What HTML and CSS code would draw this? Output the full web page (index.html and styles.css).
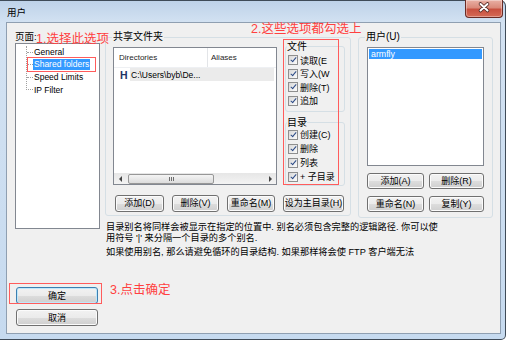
FILE: index.html
```html
<!DOCTYPE html>
<html lang="zh-CN">
<head>
    <meta charset="UTF-8">
    <title>用户</title>
    <link rel="stylesheet" href="styles.css">
</head>
<body>

<div class="window">
    <div class="titlebar">
        <span class="title">用户</span>
        <span class="close">
            <svg width="38" height="17" viewBox="0 0 38 17">
                <path d="M15.5 5 L22.5 11.5 M22.5 5 L15.5 11.5" stroke="#4e2520" stroke-width="3.6" stroke-linecap="round"/>
                <path d="M15.5 5 L22.5 11.5 M22.5 5 L15.5 11.5" stroke="#fff" stroke-width="2" stroke-linecap="round"/>
            </svg>
        </span>
    </div>

    <div class="client">
        <!-- left: page tree + ok/cancel -->
        <div class="side">
            <div class="pages-label">页面:</div>
            <div class="tree">
                <ul>
                    <li>General</li>
                    <li><span class="selected">Shared folders</span></li>
                    <li>Speed Limits</li>
                    <li>IP Filter</li>
                </ul>
            </div>
            <div class="side-buttons">
                <button class="btn default">确定</button>
                <button class="btn">取消</button>
            </div>
        </div>

        <div class="main">
            <div class="groups">
                <fieldset class="group shared">
                    <legend>共享文件夹</legend>
                    <div class="shared-body">
                        <div class="dirlist">
                            <div class="list-header">
                                <span class="col-dir">Directories</span>
                                <span class="col-alias">Aliases</span>
                            </div>
                            <div class="dir-row">
                                <b class="home">H</b>
                                <span class="dir-path">C:\Users\byb\De...</span>
                            </div>
                            <div class="hscroll">
                                <span class="arrow"><span class="tri left"></span></span>
                                <span class="thumb"><span class="grip"></span></span>
                                <span class="arrow"><span class="tri right"></span></span>
                            </div>
                        </div>

                        <div class="perms">
                            <fieldset class="sub files">
                                <legend>文件</legend>
                                <label class="check"><span class="box"></span><span class="text">读取(E</span></label>
                                <label class="check"><span class="box"></span><span class="text">写入(W</span></label>
                                <label class="check"><span class="box"></span><span class="text">删除(T)</span></label>
                                <label class="check"><span class="box"></span><span class="text">追加</span></label>
                            </fieldset>
                            <fieldset class="sub dirs">
                                <legend>目录</legend>
                                <label class="check"><span class="box"></span><span class="text">创建(C)</span></label>
                                <label class="check"><span class="box"></span><span class="text">删除</span></label>
                                <label class="check"><span class="box"></span><span class="text">列表</span></label>
                                <label class="check"><span class="box"></span><span class="text">+ 子目录</span></label>
                            </fieldset>
                        </div>
                    </div>
                    <div class="btn-row">
                        <button class="btn w-add">添加(D)</button>
                        <button class="btn w-del">删除(V)</button>
                        <button class="btn w-ren">重命名(M)</button>
                        <button class="btn w-home">设为主目录(H)</button>
                    </div>
                </fieldset>

                <fieldset class="group users">
                    <legend>用户(U)</legend>
                    <div class="userlist">
                        <div class="user-item">armfly</div>
                    </div>
                    <div class="user-buttons">
                        <button class="btn">添加(A)</button>
                        <button class="btn">删除(R)</button>
                        <button class="btn">重命名(N)</button>
                        <button class="btn">复制(Y)</button>
                    </div>
                </fieldset>
            </div>

            <div class="note">
                <p>目录别名将同样会被显示在指定的位置中. 别名必须包含完整的逻辑路径. 你可以使<br>用符号 '|' 来分隔一个目录的多个别名.</p>
                <p>如果使用别名, 那么请避免循环的目录结构. 如果那样将会使 FTP 客户端无法</p>
            </div>
        </div>
    </div>
</div>

<!-- red annotations drawn over the dialog -->
<div class="mark-text step1">1.选择此选项</div>
<div class="mark-box box1"></div>
<div class="mark-text step2">2.这些选项都勾选上</div>
<div class="mark-box box2"></div>
<div class="mark-text step3">3.点击确定</div>
<div class="mark-box box3"></div>

</body>
</html>
```

FILE: styles.css
```css
body {
    margin: 0;
    width: 506px;
    height: 340px;
    position: relative;
    overflow: hidden;
    background: #fff;
    font-family: "Liberation Sans", "Noto Sans CJK SC", sans-serif;
    font-size: 9.5px;
    color: #000;
}

/* Window frame */
.window {
    box-sizing: border-box;
    width: 506px;
    height: 340px;
    border: 1px solid #3f4b58;
    border-left: none;
    border-radius: 0 6px 5px 0;
    padding: 0 4px 5px 6px;
    background: linear-gradient(to bottom, #bed2e9 0, #d3e2f2 22px, #c6daef 100%);
    display: flex;
    flex-direction: column;
}

.titlebar {
    height: 21px;
    flex: none;
    display: flex;
    justify-content: space-between;
    align-items: flex-start;
}

.title {
    margin: 6px 0 0 1px;
    line-height: 12px;
    font-size: 9.5px;
}

.close {
    box-sizing: border-box;
    width: 38px;
    height: 18px;
    margin: -1px -2px 0 0;
    border: 1px solid #6a2b24;
    border-top: none;
    border-radius: 0 0 4px 4px;
    background: linear-gradient(to bottom, #e9b0a4 0%, #da8a7a 45%, #c8503f 55%, #d56a55 100%);
    box-shadow: inset 0 0 0 1px rgba(255, 255, 255, 0.35);
}

.close svg {
    display: block;
    margin: -1px 0 0 -1px;
}

.client {
    flex: 1;
    border: 1px solid #8f9fb1;
    background: #f0f0f0;
    display: grid;
    grid-template-columns: 85px 1fr;
    column-gap: 5px;
    padding: 8px 7px 7px 8px;
}

/* Left side */
.side {
    display: flex;
    flex-direction: column;
}

.pages-label {
    height: 12px;
    line-height: 12px;
}

.tree {
    box-sizing: border-box;
    height: 186px;
    border: 1px solid #828790;
    background: #fff;
}

.tree ul {
    list-style: none;
    margin: 2px 0 0 10px;
    padding: 0;
    border-left: 1px dotted #a0a0a0;
}

.tree li {
    height: 12.5px;
    display: flex;
    align-items: center;
    font-size: 8.5px;
    white-space: nowrap;
}

.tree li::before {
    content: "";
    width: 6px;
    border-top: 1px dotted #a0a0a0;
    margin-right: 1px;
}

/* hide the lower half of the vertical line on the last item */
.tree li:last-child {
    margin-left: -1px;
    background: linear-gradient(to bottom, transparent 50%, #fff 50%) no-repeat left top / 1px 100%;
}

.tree li:last-child::before {
    width: 7px;
}

.tree .selected {
    background: #3399ff;
    color: #fff;
    line-height: 11px;
    padding: 0 1px;
    margin-left: -1px;
}

.side-buttons {
    margin-top: auto;
    display: flex;
    flex-direction: column;
    gap: 5px;
    padding-left: 1px;
}

.side-buttons .btn {
    width: 82px;
}

/* Buttons */
.btn {
    box-sizing: border-box;
    height: 17px;
    padding: 0;
    border: 1px solid #707070;
    border-radius: 3px;
    background: linear-gradient(to bottom, #f2f2f2 0%, #ebebeb 50%, #dddddd 51%, #cfcfcf 100%);
    box-shadow: inset 0 0 0 1px #fbfbfb;
    font-family: "Liberation Sans", "Noto Sans CJK SC", sans-serif;
    font-size: 9px;
    line-height: 14px;
    color: #000;
}

.btn.default {
    border-color: #3c7fb1;
    box-shadow: inset 0 0 0 1px #bfe8fb;
}

/* Group boxes */
.main {
    display: flex;
    flex-direction: column;
}

.groups {
    display: flex;
    gap: 7px;
    align-items: flex-start;
}

fieldset {
    margin: 0;
    min-width: 0;
    border: 1px solid #d5dfe5;
    border-radius: 3px;
}

.group legend {
    font-size: 10px;
    line-height: 12px;
    padding: 0 1px;
}

.shared {
    width: 246px;
    box-sizing: border-box;
    padding: 4px 5px 3px 7px;
}

.shared legend {
    margin-left: -1px;
}

.shared-body {
    display: flex;
    gap: 8px;
    align-items: flex-start;
}

.dirlist {
    box-sizing: border-box;
    width: 164px;
    height: 138px;
    border: 1px solid #828790;
    background: #fff;
    display: flex;
    flex-direction: column;
}

.list-header {
    height: 19px;
    display: flex;
    align-items: center;
    border-bottom: 1px solid #eef0f3;
    font-size: 8px;
    color: #1e1e1e;
}

.col-dir {
    width: 88px;
    padding-left: 5px;
    align-self: stretch;
    display: flex;
    align-items: center;
    border-right: 1px solid #e3e5e8;
}

.col-alias {
    padding-left: 3px;
}

.dir-row {
    height: 13px;
    display: flex;
    align-items: center;
    padding-left: 6px;
}

.home {
    width: 10px;
    font-size: 10.5px;
    color: #1f3566;
}

.dir-path {
    flex: 1;
    align-self: stretch;
    display: flex;
    align-items: center;
    padding-left: 1px;
    margin-right: 2px;
    background: #ebebeb;
    font-size: 8.5px;
}

.hscroll {
    margin-top: auto;
    height: 11px;
    display: flex;
    align-items: center;
    background: linear-gradient(to bottom, #e6e6e6, #f3f3f3);
}

.arrow {
    width: 12px;
    height: 11px;
    display: flex;
    align-items: center;
    justify-content: center;
}

.arrow:last-child {
    margin-left: auto;
}

.tri {
    width: 0;
    height: 0;
    border-top: 3px solid transparent;
    border-bottom: 3px solid transparent;
}

.tri.left {
    border-right: 3px solid #444;
}

.tri.right {
    border-left: 3px solid #444;
}

.thumb {
    box-sizing: border-box;
    width: 86px;
    height: 10px;
    margin-left: 2px;
    border: 1px solid #979797;
    border-radius: 2px;
    background: linear-gradient(to bottom, #f4f4f4, #dcdcdc);
    display: flex;
    align-items: center;
    justify-content: center;
}

.grip {
    width: 5px;
    height: 4px;
    background: repeating-linear-gradient(90deg, #6d6d6d 0 1px, transparent 1px 2px);
}

/* Permission check boxes */
.perms {
    width: 60px;
    margin-top: -6px;
    display: flex;
    flex-direction: column;
    gap: 5px;
}

.sub {
    padding: 1.5px 0 3px 2px;
}

.sub legend {
    font-size: 10px;
    line-height: 11px;
    padding: 0;
}

.sub.dirs {
    padding: 0 0 1px 2px;
}

.check {
    height: 13.5px;
    display: flex;
    align-items: center;
    white-space: nowrap;
}

.dirs .check {
    height: 14px;
}

.box {
    box-sizing: border-box;
    width: 10px;
    height: 10px;
    margin-right: 2px;
    flex: none;
    border: 1px solid #8e8f8f;
    background: linear-gradient(135deg, #d8d8d8, #fbfbfb);
    display: flex;
    align-items: center;
    justify-content: center;
}

.box::after {
    content: "";
    width: 2px;
    height: 5px;
    margin-top: -2px;
    border: solid #2b4a86;
    border-width: 0 1.5px 1.5px 0;
    transform: rotate(40deg);
}

.check .text {
    font-size: 9px;
}

.btn-row {
    display: flex;
    gap: 8px;
    margin: 9px 0 0 2px;
}

.w-add { width: 49px; }
.w-del { width: 47px; }
.w-ren { width: 48px; }
.w-home { width: 61px; }

/* Users group */
.users {
    width: 135px;
    box-sizing: border-box;
    padding: 4px 8px 5px 8px;
}

.users legend {
    margin-left: -2px;
}

.userlist {
    box-sizing: border-box;
    height: 119px;
    border: 1px solid #828790;
    background: #fff;
}

.user-item {
    margin: 1px 1px 0;
    height: 10px;
    line-height: 10px;
    padding-left: 2px;
    background: #3399ff;
    color: #fff;
    font-size: 8.8px;
}

.user-buttons {
    display: grid;
    grid-template-columns: 57px 55px;
    column-gap: 5px;
    row-gap: 7px;
    margin-top: 7px;
}

.user-buttons .btn {
    height: 16px;
    line-height: 13px;
}

/* Help text */
.note {
    margin-top: 4px;
    font-size: 9.2px;
    line-height: 10.5px;
    white-space: nowrap;
}

.note p {
    margin: 0 0 4px 1px;
}

/* Red annotations */
.mark-text {
    position: absolute;
    color: #ff4040;
    font-family: "Liberation Sans", "Noto Sans CJK SC", sans-serif;
    font-size: 12.5px;
    line-height: 14px;
    white-space: nowrap;
}

.mark-box {
    position: absolute;
    box-sizing: border-box;
    border: 1px solid #ff5c5c;
}

.step1 { left: 36px; top: 32px; }
.step2 { left: 251px; top: 22px; }
.step3 { left: 110px; top: 283px; }

.box1 { left: 27px; top: 57px; width: 69px; height: 15px; }
.box2 { left: 283px; top: 39px; width: 56px; height: 146px; }
.box3 { left: 9px; top: 283px; width: 93px; height: 21px; }
```
